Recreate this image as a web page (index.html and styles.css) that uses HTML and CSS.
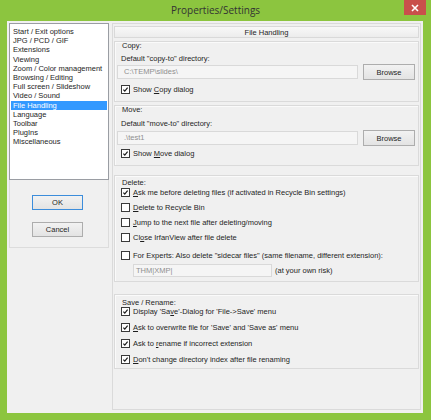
FILE: index.html
```html
<!DOCTYPE html>
<html lang="en">

<head>
    <meta charset="UTF-8">
    <meta name="viewport" content="width=device-width, initial-scale=1.0">
    <title>Properties/Settings</title>
    <link rel="stylesheet" href="styles.css">
</head>

<body>
    <div class="window">
        <div class="titlebar">
            <span></span>
            <span class="title">Properties/Settings</span>
            <span class="controls">
                <span class="close">
                    <svg width="8" height="8" viewBox="0 0 8 8">
                        <path d="M1 1 L7 7 M7 1 L1 7" stroke="#fff" stroke-width="1.6" />
                    </svg>
                </span>
            </span>
        </div>

        <div class="frame">
            <div class="client">
                <!-- left column: page list + dialog buttons -->
                <div class="sidebar">
                    <ul class="pages">
                        <li>Start / Exit options</li>
                        <li>JPG / PCD / GIF</li>
                        <li>Extensions</li>
                        <li>Viewing</li>
                        <li>Zoom / Color management</li>
                        <li>Browsing / Editing</li>
                        <li>Full screen / Slideshow</li>
                        <li>Video / Sound</li>
                        <li class="selected">File Handling</li>
                        <li>Language</li>
                        <li>Toolbar</li>
                        <li>PlugIns</li>
                        <li>Miscellaneous</li>
                    </ul>
                    <div class="actions">
                        <button class="btn default">OK</button>
                        <button class="btn">Cancel</button>
                    </div>
                </div>

                <!-- right column: current page -->
                <div class="page">
                    <div class="page-title">File Handling</div>

                    <div class="group copy">
                        <div class="glabel">Copy:</div>
                        <div class="caption">Default "copy-to" directory:</div>
                        <div class="pathrow">
                            <div class="field">C:\TEMP\slides\</div>
                            <button class="btn browse">Browse</button>
                        </div>
                        <label class="check first"><span class="box on"><svg viewBox="0 0 9 9"><path d="M1.8 4.6 L3.6 6.6 L7.2 2.2" /></svg></span><span>Show <u>C</u>opy dialog</span></label>
                    </div>

                    <div class="group move">
                        <div class="glabel">Move:</div>
                        <div class="caption">Default "move-to" directory:</div>
                        <div class="pathrow">
                            <div class="field">.\test1</div>
                            <button class="btn browse">Browse</button>
                        </div>
                        <label class="check first"><span class="box on"><svg viewBox="0 0 9 9"><path d="M1.8 4.6 L3.6 6.6 L7.2 2.2" /></svg></span><span>Show <u>M</u>ove dialog</span></label>
                    </div>

                    <div class="group delete">
                        <div class="glabel">Delete:</div>
                        <label class="check first"><span class="box on"><svg viewBox="0 0 9 9"><path d="M1.8 4.6 L3.6 6.6 L7.2 2.2" /></svg></span><span><u>A</u>sk me before deleting files (if activated in Recycle Bin settings)</span></label>
                        <label class="check"><span class="box"></span><span><u>D</u>elete to Recycle Bin</span></label>
                        <label class="check"><span class="box"></span><span><u>J</u>ump to the next file after deleting/moving</span></label>
                        <label class="check"><span class="box"></span><span>Cl<u>o</u>se IrfanView after file delete</span></label>
                        <label class="check experts"><span class="box"></span><span>For Experts: Also delete "sidecar files" (same filename, different extension):</span></label>
                        <div class="riskrow">
                            <div class="field small">THM|XMP|</div>
                            <span>(at your own risk)</span>
                        </div>
                    </div>

                    <div class="group save">
                        <div class="glabel">Save / Rename:</div>
                        <label class="check first"><span class="box on"><svg viewBox="0 0 9 9"><path d="M1.8 4.6 L3.6 6.6 L7.2 2.2" /></svg></span><span>Display 'Sa<u>v</u>e'-Dialog for 'File-&gt;Save' menu</span></label>
                        <label class="check"><span class="box on"><svg viewBox="0 0 9 9"><path d="M1.8 4.6 L3.6 6.6 L7.2 2.2" /></svg></span><span><u>A</u>sk to overwrite file for 'Save' and 'Save as' menu</span></label>
                        <label class="check"><span class="box on"><svg viewBox="0 0 9 9"><path d="M1.8 4.6 L3.6 6.6 L7.2 2.2" /></svg></span><span>Ask to <u>r</u>ename if incorrect extension</span></label>
                        <label class="check"><span class="box on"><svg viewBox="0 0 9 9"><path d="M1.8 4.6 L3.6 6.6 L7.2 2.2" /></svg></span><span><u>D</u>on't change directory index after file renaming</span></label>
                    </div>
                </div>
            </div>
        </div>
    </div>
</body>

</html>
```

FILE: styles.css
```css
body {
    margin: 0;
    background: #8cc53f;
    font-family: 'Liberation Sans', Arial, sans-serif;
    font-size: 7.5px;
    color: #1e1e1e;
}

.window {
    width: 431px;
    height: 420px;
    background: #8cc53f;
    display: flex;
    flex-direction: column;
}

.titlebar {
    height: 21px;
    display: grid;
    grid-template-columns: 1fr auto 1fr;
    align-items: start;
}

.title {
    font-family: 'Open Sans', 'Noto Sans', sans-serif;
    font-size: 10px;
    line-height: 21px;
    color: #333;
}

.controls {
    display: flex;
    justify-content: flex-end;
}

.close {
    width: 22px;
    height: 15px;
    margin-right: 5px;
    background: #c9504b;
    display: flex;
    align-items: center;
    justify-content: center;
}

.frame {
    flex: 1;
    padding: 0 8px 7px 7px;
    display: flex;
}

.client {
    flex: 1;
    background: #f0f0f0;
    padding: 2px 2px 3px 2px;
    display: flex;
    gap: 3px;
}

/* left column */
.sidebar {
    width: 100px;
    display: flex;
    flex-direction: column;
}

.pages {
    list-style: none;
    margin: 0;
    padding: 3px 1px 0 1px;
    height: 157px;
    box-sizing: border-box;
    background: #fff;
    border: 1px solid #9a9da3;
}

.pages li {
    line-height: 9.2px;
    height: 9.2px;
    padding-left: 2px;
    white-space: nowrap;
}

.pages li.selected {
    background: #3399ff;
    color: #fff;
}

.actions {
    height: 68px;
    box-sizing: border-box;
    border: 1px solid #dcdcdc;
    border-top: none;
    padding-top: 15px;
    display: flex;
    flex-direction: column;
    align-items: center;
    gap: 12px;
}

.btn {
    font-family: inherit;
    font-size: 7.5px;
    color: #1e1e1e;
    background: linear-gradient(#f2f2f2, #e3e3e3);
    border: 1px solid #adadad;
    border-radius: 0;
    padding: 0;
    margin: 0;
}

.actions .btn {
    width: 51px;
    height: 15px;
    margin-right: 3px;
}

.btn.default {
    border-color: #3c8ddb;
}

/* right column */
.page {
    flex: 1;
    height: 387px;
    box-sizing: border-box;
    border: 1px solid #dadada;
    display: flex;
    flex-direction: column;
}

.page-title {
    height: 12px;
    line-height: 12px;
    margin: 2px 1px 0;
    text-align: center;
    background: linear-gradient(#f8f8f8, #ececec);
    border: 1px solid #d9d9d9;
    box-sizing: border-box;
}

.group {
    margin: 3px 1px 0;
    border: 1px solid #dadada;
    box-shadow: inset 1px 1px 0 #fafafa;
    padding: 0 3px 7px 6px;
    display: flex;
    flex-direction: column;
}

.glabel {
    line-height: 8px;
    height: 8px;
    margin-left: 1px;
}

.caption {
    line-height: 9px;
    height: 9px;
    margin-top: 4px;
}

.pathrow {
    margin: 1px 0 0 -4px;
    display: flex;
    align-items: center;
    gap: 5px;
    height: 16px;
}

.move .caption {
    margin-top: 5px;
}

.move .pathrow {
    margin-top: 2px;
}

.field {
    flex: 1;
    height: 14px;
    line-height: 12px;
    box-sizing: border-box;
    border: 1px solid #d9d9d9;
    background: #f5f5f5;
    color: #8f8f8f;
    padding-left: 6px;
}

.browse {
    width: 52px;
    height: 16px;
}

.check {
    display: flex;
    align-items: center;
    gap: 3px;
    height: 9px;
    line-height: 9px;
    margin-top: 6px;
    white-space: nowrap;
}

.copy .check.first {
    margin-top: 5px;
}

.move .check.first {
    margin-top: 3px;
}

.box {
    width: 9px;
    height: 9px;
    box-sizing: border-box;
    border: 1px solid #3a3a3a;
    background: #fff;
    flex: none;
}

.box svg {
    display: block;
    width: 7px;
    height: 7px;
}

.box svg path {
    fill: none;
    stroke: #1a1a1a;
    stroke-width: 1.5;
}

.delete {
    margin-top: 9px;
    padding-bottom: 4px;
}

.delete .glabel {
    margin-top: 3px;
}

.delete .check.first {
    margin-top: 1px;
}

.delete .check.experts {
    margin-top: 9px;
}

.riskrow {
    margin: 4px 0 0 12px;
    display: flex;
    align-items: center;
    gap: 3px;
    height: 13px;
}

.field.small {
    flex: none;
    width: 139px;
    height: 13px;
    line-height: 11px;
    padding-left: 2px;
}

.save {
    margin-top: 12px;
    padding-bottom: 4px;
}

.save .glabel {
    margin-top: 4px;
}

.save .check {
    margin-top: 7px;
}

.save .check.first {
    margin-top: 0;
}
```
